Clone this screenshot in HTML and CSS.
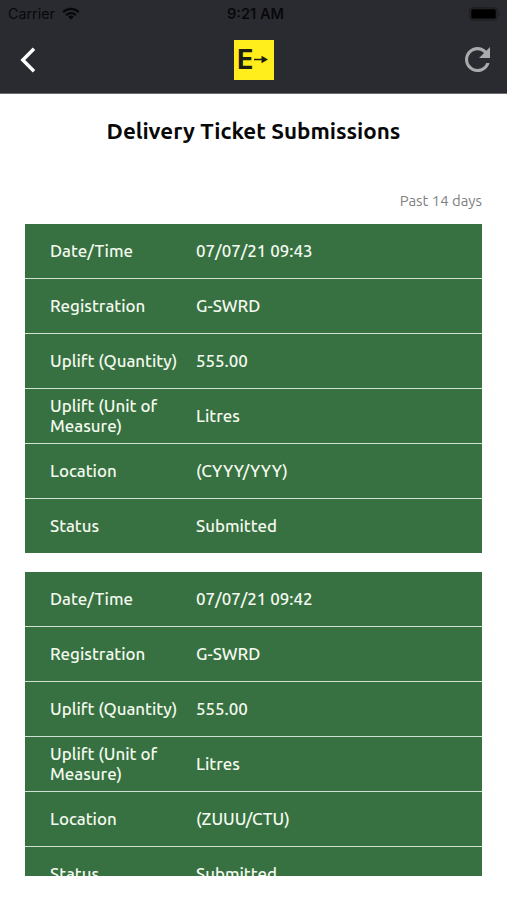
FILE: index.html
```
<!DOCTYPE html>
<html lang="en">

<head>
  <meta charset="UTF-8">
  <meta name="viewport" content="width=device-width, initial-scale=1">
  <title>Delivery Ticket Submissions</title>
  <link rel="stylesheet" href="styles.css">
</head>

<body>

  <header class="header">
    <div class="status-bar">
      <span class="carrier">
        Carrier
        <svg class="wifi" viewBox="0 0 18 13" fill="none" stroke="currentColor" stroke-width="2.2">
          <path d="M1.2 5.1a11 11 0 0 1 15.6 0" />
          <path d="M4.1 8.2a7 7 0 0 1 9.8 0" />
          <path d="M9 12.6 6.2 9.9a4 4 0 0 1 5.6 0z" fill="currentColor" stroke="none" />
        </svg>
      </span>
      <time class="clock">9:21 AM</time>
      <svg class="battery" viewBox="0 0 32 14">
        <rect x="0.5" y="0.5" width="28" height="13" rx="3.5" fill="#222327" stroke="#1f2024" />
        <rect x="2.3" y="2.3" width="24.4" height="9.2" rx="1.5" />
        <path d="M30 4.5q2 2.5 0 5z" fill="#1c1d20" />
      </svg>
    </div>
    <nav class="nav">
      <button type="button" class="back" aria-label="Back">
        <svg viewBox="0 0 16 26" fill="none" stroke="currentColor" stroke-width="3.4">
          <path d="M14 1.8 2.8 13 14 24.2" />
        </svg>
      </button>
      <div class="logo">
        <span class="logo-letter">E</span>
        <svg class="logo-arrow" viewBox="0 0 13 8">
          <path d="M0 3.3h7V.5L13 4 7 7.5V4.7H0z" fill="currentColor" />
        </svg>
      </div>
      <button type="button" class="refresh" aria-label="Refresh">
        <svg viewBox="80 80 352 352" fill="currentColor">
          <path d="M256 388c-72.6 0-132-59.4-132-132s59.4-132 132-132c36.3 0 69.3 15.4 92.4 39.6L278 234h154V80l-51.7 51.7C348.4 99.8 304.4 80 256 80c-96.8 0-176 79.2-176 176s78.1 176 176 176c81 0 148.3-54.1 169.4-128h-46.5c-18.8 49.6-67.2 84-122.9 84z" />
        </svg>
      </button>
    </nav>
  </header>

  <main class="content">
    <h1 class="title">Delivery Ticket Submissions</h1>
    <p class="period">Past 14 days</p>

    <div class="tickets">
      <dl class="ticket">
        <div class="row"><dt>Date/Time</dt><dd>07/07/21 09:43</dd></div>
        <div class="row"><dt>Registration</dt><dd>G-SWRD</dd></div>
        <div class="row"><dt>Uplift (Quantity)</dt><dd>555.00</dd></div>
        <div class="row"><dt>Uplift (Unit of Measure)</dt><dd>Litres</dd></div>
        <div class="row"><dt>Location</dt><dd>(CYYY/YYY)</dd></div>
        <div class="row"><dt>Status</dt><dd>Submitted</dd></div>
      </dl>

      <dl class="ticket">
        <div class="row"><dt>Date/Time</dt><dd>07/07/21 09:42</dd></div>
        <div class="row"><dt>Registration</dt><dd>G-SWRD</dd></div>
        <div class="row"><dt>Uplift (Quantity)</dt><dd>555.00</dd></div>
        <div class="row"><dt>Uplift (Unit of Measure)</dt><dd>Litres</dd></div>
        <div class="row"><dt>Location</dt><dd>(ZUUU/CTU)</dd></div>
        <div class="row"><dt>Status</dt><dd>Submitted</dd></div>
      </dl>
    </div>
  </main>

</body>

</html>
```
FILE: styles.css
```
* {
  box-sizing: border-box;
  margin: 0;
}

body {
  display: flex;
  flex-flow: column;
  height: 100vh;
  overflow: hidden;
  background-color: #fff;
  font-family: Ubuntu, "Noto Sans", sans-serif;
}

.header {
  flex: none;
  height: 94px;
  border-bottom: 1px solid #6b6c70;
  background-color: #2a2b30;
}

.status-bar {
  display: grid;
  grid-template-columns: 1fr auto 1fr;
  align-items: center;
  height: 27px;
  padding: 0 6px 0 8px;
  color: #08080a;
  font-family: Inter, sans-serif;
  font-size: 14.3px;
}

.carrier {
  display: flex;
  align-items: center;
  gap: 7px;
}

.wifi {
  width: 18px;
  height: 13px;
}

.clock {
  margin-left: 2px;
  font-size: 14.6px;
  font-weight: 600;
}

.battery {
  justify-self: end;
  width: 32px;
  height: 14px;
}

.nav {
  display: grid;
  grid-template-columns: 1fr auto 1fr;
  align-items: center;
  height: 65px;
  padding: 0 17px 0 20px;

  button {
    border: 0;
    padding: 0;
    background-color: transparent;
  }

  svg {
    display: block;
  }
}

.back {
  justify-self: start;
  color: #fff;

  svg {
    width: 16px;
    height: 26px;
  }
}

.logo {
  display: flex;
  align-items: center;
  gap: 1px;
  width: 40px;
  height: 40px;
  margin-right: 2px;
  padding-left: 3px;
  background-color: #ffed1c;
  color: #1c1e12;
}

.logo-letter {
  font-family: Inter, sans-serif;
  font-size: 27px;
  font-weight: 700;
  line-height: 40px;
}

.logo-arrow {
  width: 14px;
  height: 9px;
}

.refresh {
  justify-self: end;
  color: #a9aaac;

  svg {
    width: 25px;
    height: 25px;
  }
}

.content {
  display: flex;
  flex: 1;
  flex-flow: column;
  min-height: 0;
  padding: 23px 25px 24px;
}

.title {
  color: #080808;
  font-size: 22.4px;
  font-weight: 700;
  line-height: 28px;
  text-align: center;
}

.period {
  margin-top: 46px;
  color: #808080;
  font-size: 14.9px;
  line-height: 20px;
  text-align: right;
}

.tickets {
  flex: 1;
  min-height: 0;
  margin-top: 13px;
  overflow: hidden;
}

.ticket {
  margin-bottom: 19px;
  background-color: #377141;
  color: #f4f9ef;
  font-size: 16.9px;
  font-weight: 500;
  line-height: 20px;
}

.row {
  display: grid;
  grid-template-columns: 130px 1fr;
  column-gap: 16px;
  align-items: center;
  height: 55px;
  padding-left: 25px;
  border-bottom: 1px solid #d3e2d4;

  &:last-child {
    height: 54px;
    border-bottom: 0;
  }
}
```
